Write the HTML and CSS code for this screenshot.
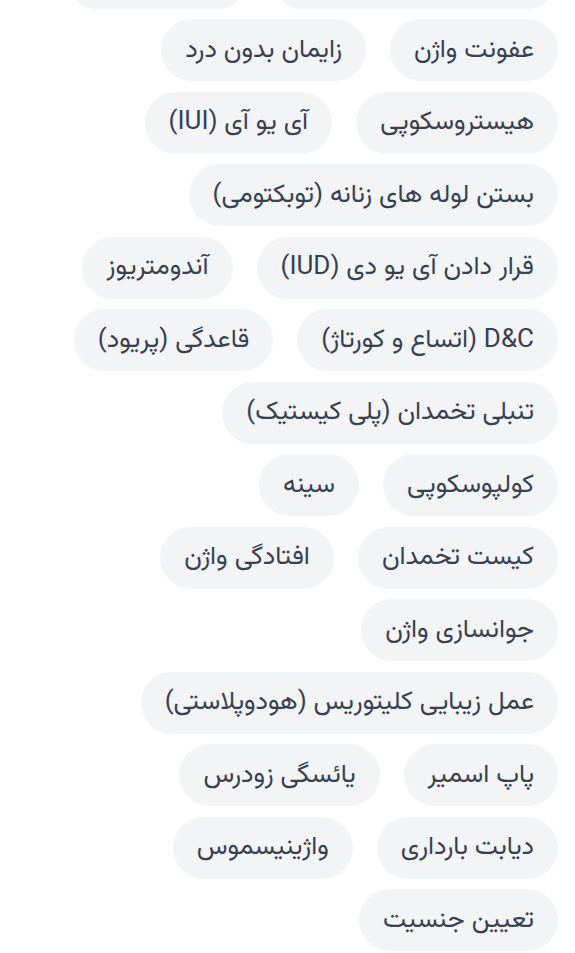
FILE: index.html
```html
<!DOCTYPE html>
<html lang="fa" dir="rtl">
<head>
<meta charset="utf-8">
<link rel="stylesheet" href="styles.css">
</head>
<body>
<div class="tags">
  <div class="row">
    <span class="chip blank blank-a"></span>
    <span class="chip blank blank-b"></span>
  </div>
  <div class="row">
    <span class="chip">عفونت واژن</span>
    <span class="chip">زایمان بدون درد</span>
  </div>
  <div class="row">
    <span class="chip">هیستروسکوپی</span>
    <span class="chip">آی یو آی (IUI)</span>
  </div>
  <div class="row">
    <span class="chip">بستن لوله های زنانه (توبکتومی)</span>
  </div>
  <div class="row">
    <span class="chip">قرار دادن آی یو دی (IUD)</span>
    <span class="chip">آندومتریوز</span>
  </div>
  <div class="row">
    <span class="chip">D&amp;C (اتساع و کورتاژ)</span>
    <span class="chip">قاعدگی (پریود)</span>
  </div>
  <div class="row">
    <span class="chip">تنبلی تخمدان (پلی کیستیک)</span>
  </div>
  <div class="row">
    <span class="chip">کولپوسکوپی</span>
    <span class="chip">سینه</span>
  </div>
  <div class="row">
    <span class="chip">کیست تخمدان</span>
    <span class="chip">افتادگی واژن</span>
  </div>
  <div class="row">
    <span class="chip">جوانسازی واژن</span>
  </div>
  <div class="row">
    <span class="chip">عمل زیبایی کلیتوریس (هودوپلاستی)</span>
  </div>
  <div class="row">
    <span class="chip">پاپ اسمیر</span>
    <span class="chip">یائسگی زودرس</span>
  </div>
  <div class="row">
    <span class="chip">دیابت بارداری</span>
    <span class="chip">واژینیسموس</span>
  </div>
  <div class="row">
    <span class="chip">تعیین جنسیت</span>
  </div>
</div>
</body>
</html>
```
FILE: styles.css
```css
html, body {
  margin: 0;
  padding: 0;
  background: #ffffff;
}
body {
  font-family: "Vazirmatn", "Noto Sans Arabic", "DejaVu Sans", sans-serif;
  color: #374151;
  overflow: hidden;
}
.tags {
  direction: rtl;
  display: flex;
  flex-direction: column;
  gap: 10.5px;
  margin-top: -53.5px;
  padding: 0 17px 0 0;
}
.row {
  display: flex;
  gap: 24px;
}
.chip {
  display: inline-flex;
  align-items: center;
  height: 62px;
  box-sizing: border-box;
  padding: 0 24px;
  border-radius: 31px;
  background: #f3f4f6;
  font-size: 26px;
  white-space: nowrap;
}
.blank-a {
  width: 286px;
}
.blank-b {
  width: 182px;
}
```
